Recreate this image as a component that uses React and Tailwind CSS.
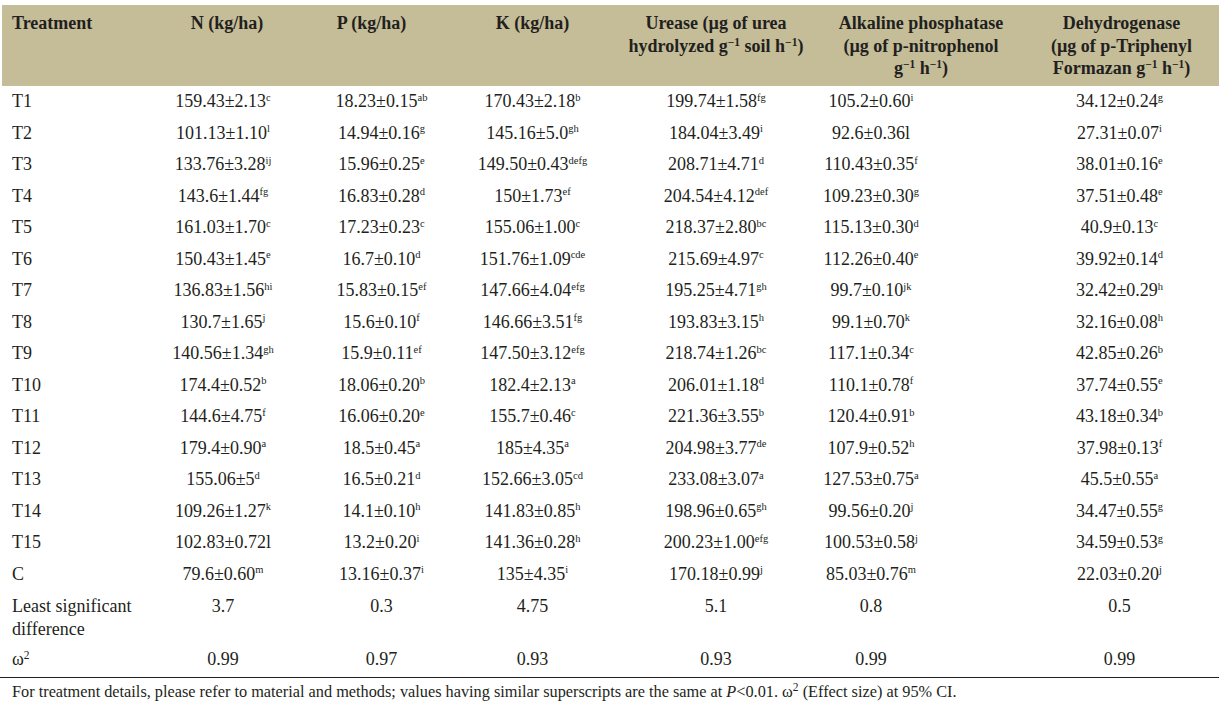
import React from "react";

const rows = [
  ["T1", "159.43±2.13|c", "18.23±0.15|ab", "170.43±2.18|b", "199.74±1.58|fg", "105.2±0.60|i", "34.12±0.24|g"],
  ["T2", "101.13±1.10|l", "14.94±0.16|g", "145.16±5.0|gh", "184.04±3.49|i", "92.6±0.36l", "27.31±0.07|i"],
  ["T3", "133.76±3.28|ij", "15.96±0.25|e", "149.50±0.43|defg", "208.71±4.71|d", "110.43±0.35|f", "38.01±0.16|e"],
  ["T4", "143.6±1.44|fg", "16.83±0.28|d", "150±1.73|ef", "204.54±4.12|def", "109.23±0.30|g", "37.51±0.48|e"],
  ["T5", "161.03±1.70|c", "17.23±0.23|c", "155.06±1.00|c", "218.37±2.80|bc", "115.13±0.30|d", "40.9±0.13|c"],
  ["T6", "150.43±1.45|e", "16.7±0.10|d", "151.76±1.09|cde", "215.69±4.97|c", "112.26±0.40|e", "39.92±0.14|d"],
  ["T7", "136.83±1.56|hi", "15.83±0.15|ef", "147.66±4.04|efg", "195.25±4.71|gh", "99.7±0.10|jk", "32.42±0.29|h"],
  ["T8", "130.7±1.65|j", "15.6±0.10|f", "146.66±3.51|fg", "193.83±3.15|h", "99.1±0.70|k", "32.16±0.08|h"],
  ["T9", "140.56±1.34|gh", "15.9±0.11|ef", "147.50±3.12|efg", "218.74±1.26|bc", "117.1±0.34|c", "42.85±0.26|b"],
  ["T10", "174.4±0.52|b", "18.06±0.20|b", "182.4±2.13|a", "206.01±1.18|d", "110.1±0.78|f", "37.74±0.55|e"],
  ["T11", "144.6±4.75|f", "16.06±0.20|e", "155.7±0.46|c", "221.36±3.55|b", "120.4±0.91|b", "43.18±0.34|b"],
  ["T12", "179.4±0.90|a", "18.5±0.45|a", "185±4.35|a", "204.98±3.77|de", "107.9±0.52|h", "37.98±0.13|f"],
  ["T13", "155.06±5|d", "16.5±0.21|d", "152.66±3.05|cd", "233.08±3.07|a", "127.53±0.75|a", "45.5±0.55|a"],
  ["T14", "109.26±1.27|k", "14.1±0.10|h", "141.83±0.85|h", "198.96±0.65|gh", "99.56±0.20|j", "34.47±0.55|g"],
  ["T15", "102.83±0.72l", "13.2±0.20|i", "141.36±0.28|h", "200.23±1.00|efg", "100.53±0.58|j", "34.59±0.53|g"],
  ["C", "79.6±0.60|m", "13.16±0.37|i", "135±4.35|i", "170.18±0.99|j", "85.03±0.76|m", "22.03±0.20|j"],
];

const dataPad = ["pl-[10px] text-left", "pr-[4px]", "pl-[8px]", "", "", "pr-[100px]", ""];

function Val({ v }) {
  const [main, sup] = v.split("|");
  return (
    <>
      {main}
      {sup && <sup className="text-[10.5px] top-[-0.6em]">{sup}</sup>}
    </>
  );
}

function Sup({ children }) {
  return <sup className="text-[11.5px] top-[-0.5em]">{children}</sup>;
}

export default function App() {
  return (
    <div className="w-[1219px] h-[701px] bg-white overflow-hidden font-['Liberation_Serif',serif] text-[#231f20]">
      <div className="h-[5px]" />
      <table className="table-fixed border-collapse w-[1217px] ml-[2px] text-[18px]">
        <colgroup>
          <col className="w-[148px]" />
          <col className="w-[150px]" />
          <col className="w-[155px]" />
          <col className="w-[155px]" />
          <col className="w-[212px]" />
          <col className="w-[198px]" />
          <col className="w-[199px]" />
        </colgroup>
        <thead>
          <tr className="bg-[#c4bd97] font-bold align-top leading-[22.5px]">
            <th className="text-left pl-[10px] pt-[7px] pb-[7px] font-bold h-[81px]">Treatment</th>
            <th className="text-center pl-[4px] pt-[7px] font-bold">N (kg/ha)</th>
            <th className="text-center pr-[12px] pt-[7px] font-bold">P (kg/ha)</th>
            <th className="text-center pt-[7px] font-bold">K (kg/ha)</th>
            <th className="text-center pt-[7px] font-bold whitespace-nowrap">
              Urease (µg of urea
              <br />
              hydrolyzed g<Sup>−1</Sup> soil h<Sup>−1</Sup>)
            </th>
            <th className="text-center pt-[7px] font-bold whitespace-nowrap">
              Alkaline phosphatase
              <br />
              (µg of p-nitrophenol
              <br />
              g<Sup>−1</Sup> h<Sup>−1</Sup>)
            </th>
            <th className="text-center pl-[4px] pt-[7px] font-bold whitespace-nowrap">
              Dehydrogenase
              <br />
              (µg of p-Triphenyl
              <br />
              Formazan g<Sup>−1</Sup> h<Sup>−1</Sup>)
            </th>
          </tr>
        </thead>
        <tbody>
          {rows.map((r) => (
            <tr key={r[0]} className="align-top leading-[21.5px]">
              {r.map((c, i) => (
                <td key={i} className={`py-[5px] whitespace-nowrap text-center ${dataPad[i]}`}>
                  <Val v={c} />
                </td>
              ))}
            </tr>
          ))}
          <tr className="align-top leading-[23px]">
            <td className="pl-[10px] pt-[5px] pb-[5px] text-left">Least significant difference</td>
            <td className="pt-[5px] text-center pr-[4px]">3.7</td>
            <td className="pt-[5px] text-center pl-[8px]">0.3</td>
            <td className="pt-[5px] text-center">4.75</td>
            <td className="pt-[5px] text-center">5.1</td>
            <td className="pt-[5px] text-center pr-[100px]">0.8</td>
            <td className="pt-[5px] text-center">0.5</td>
          </tr>
          <tr className="align-top leading-[21.5px]">
            <td className="pl-[10px] pt-[3px] pb-[6px] text-left">
              ω<Sup>2</Sup>
            </td>
            <td className="pt-[3px] text-center pr-[4px]">0.99</td>
            <td className="pt-[3px] text-center pl-[8px]">0.97</td>
            <td className="pt-[3px] text-center">0.93</td>
            <td className="pt-[3px] text-center">0.93</td>
            <td className="pt-[3px] text-center pr-[100px]">0.99</td>
            <td className="pt-[3px] text-center">0.99</td>
          </tr>
        </tbody>
      </table>
      <div className="border-t-[1.5px] border-[#231f20] w-[1219px]" />
      <div className="pl-[12px] pt-[4px] text-[16.3px] leading-[19px] whitespace-nowrap">
        For treatment details, please refer to material and methods; values having similar superscripts are the same at{" "}
        <i>P</i>&lt;0.01. ω<Sup>2</Sup> (Effect size) at 95% CI.
      </div>
    </div>
  );
}
